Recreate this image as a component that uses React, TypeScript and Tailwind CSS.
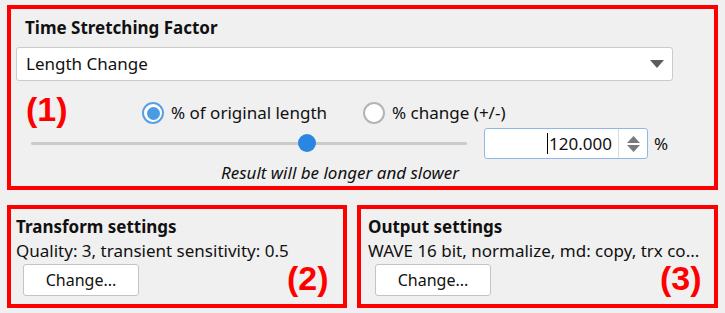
import { useState } from "react";

const font = { fontFamily: '"Noto Sans", "Open Sans", sans-serif' };

function Radio({ checked, label }: { checked: boolean; label: string }) {
  return (
    <label className="flex items-center gap-[7px]">
      <span
        className={`flex h-[22px] w-[22px] items-center justify-center rounded-full border-2 bg-white ${
          checked ? "border-[#5b9fe3]" : "border-[#b4b4b4]"
        }`}
      >
        {checked && <span className="h-[13px] w-[13px] rounded-full bg-[#4b9be3]" />}
      </span>
      <span>{label}</span>
    </label>
  );
}

function ChangeButton() {
  return (
    <button className="h-[32px] w-[116px] rounded-[3px] border border-[#c4c4c4] bg-white text-[16px] text-[#111]">
      Change...
    </button>
  );
}

function Tag({ n, className }: { n: number; className: string }) {
  return (
    <span
      className={`absolute text-[34px] font-bold leading-[40px] text-[#ff0000] ${className}`}
      style={{ fontFamily: '"Liberation Sans", Arial, sans-serif' }}
    >
      ({n})
    </span>
  );
}

export default function App() {
  const [value] = useState("120.000");

  return (
    <div className="h-[313px] w-[725px] bg-[#f0f0f0] px-[7px] pt-[5px] text-[17px] leading-[22px] text-[#111]" style={font}>
      {/* Time stretching factor */}
      <section className="relative h-[185px] border-4 border-[#ff0000] pl-[5px] pt-[8px]">
        <h2 className="ml-[9px] font-bold">Time Stretching Factor</h2>
        <div className="mt-[8px] flex h-[34px] w-[657px] items-center justify-between rounded-[3px] border border-[#cbcbcb] bg-white pl-[9px] pr-[8px]">
          <span>Length Change</span>
          <svg width="14" height="8" viewBox="0 0 14 8">
            <path d="M0 0h14L7 8z" fill="#5c5c5c" />
          </svg>
        </div>

        <Tag n={1} className="left-[15px] top-[80px]" />

        <div className="mt-[21px] flex h-[22px] items-center gap-[36px] pl-[126px]">
          <Radio checked label="% of original length" />
          <Radio checked={false} label="% change (+/-)" />
        </div>

        <div className="mt-[4px] flex h-[31px] items-center">
          <div className="relative ml-[15px] h-[3px] w-[436px] rounded-full bg-[#cacaca]">
            <span className="absolute left-[267px] top-[-8px] h-[18px] w-[18px] rounded-full bg-[#2a86e2]" />
          </div>
          <div className="ml-[17px] flex h-[31px] w-[164px] rounded-[3px] border border-[#8fb8e6] bg-white">
            <div className="flex flex-1 items-center justify-end pr-[6px]">
              <span className="mr-[1px] h-[21px] w-[1.5px] bg-black" />
              <span>{value}</span>
            </div>
            <div className="flex w-[29px] flex-col items-center justify-center gap-[2px] border-l border-[#dcdcdc]">
              <svg width="13" height="7" viewBox="0 0 13 7">
                <path d="M6.5 0L13 7H0z" fill="#7a7a7a" />
              </svg>
              <svg width="13" height="7" viewBox="0 0 13 7">
                <path d="M0 0h13L6.5 7z" fill="#7a7a7a" />
              </svg>
            </div>
          </div>
          <span className="ml-[6px]">%</span>
        </div>

        <p className="mt-[3px] pr-[50px] text-center italic">Result will be longer and slower</p>
      </section>

      <div className="mt-[15px] flex gap-[10px]">
        {/* Transform settings */}
        <section className="relative h-[103px] w-[340px] border-4 border-[#ff0000] pl-[5px] pt-[7px]">
          <h3 className="font-bold">Transform settings</h3>
          <p className="mt-[2px]">Quality: 3, transient sensitivity: 0.5</p>
          <div className="ml-[7px] mt-[2px]">
            <ChangeButton />
          </div>
          <Tag n={2} className="left-[276px] top-[49px]" />
        </section>

        {/* Output settings */}
        <section className="relative h-[103px] flex-1 border-4 border-[#ff0000] pl-[7px] pt-[7px]">
          <h3 className="font-bold">Output settings</h3>
          <p className="mt-[2px]">WAVE 16 bit, normalize, md: copy, trx co...</p>
          <div className="ml-[7px] mt-[2px]">
            <ChangeButton />
          </div>
          <Tag n={3} className="left-[299px] top-[49px]" />
        </section>
      </div>
    </div>
  );
}
